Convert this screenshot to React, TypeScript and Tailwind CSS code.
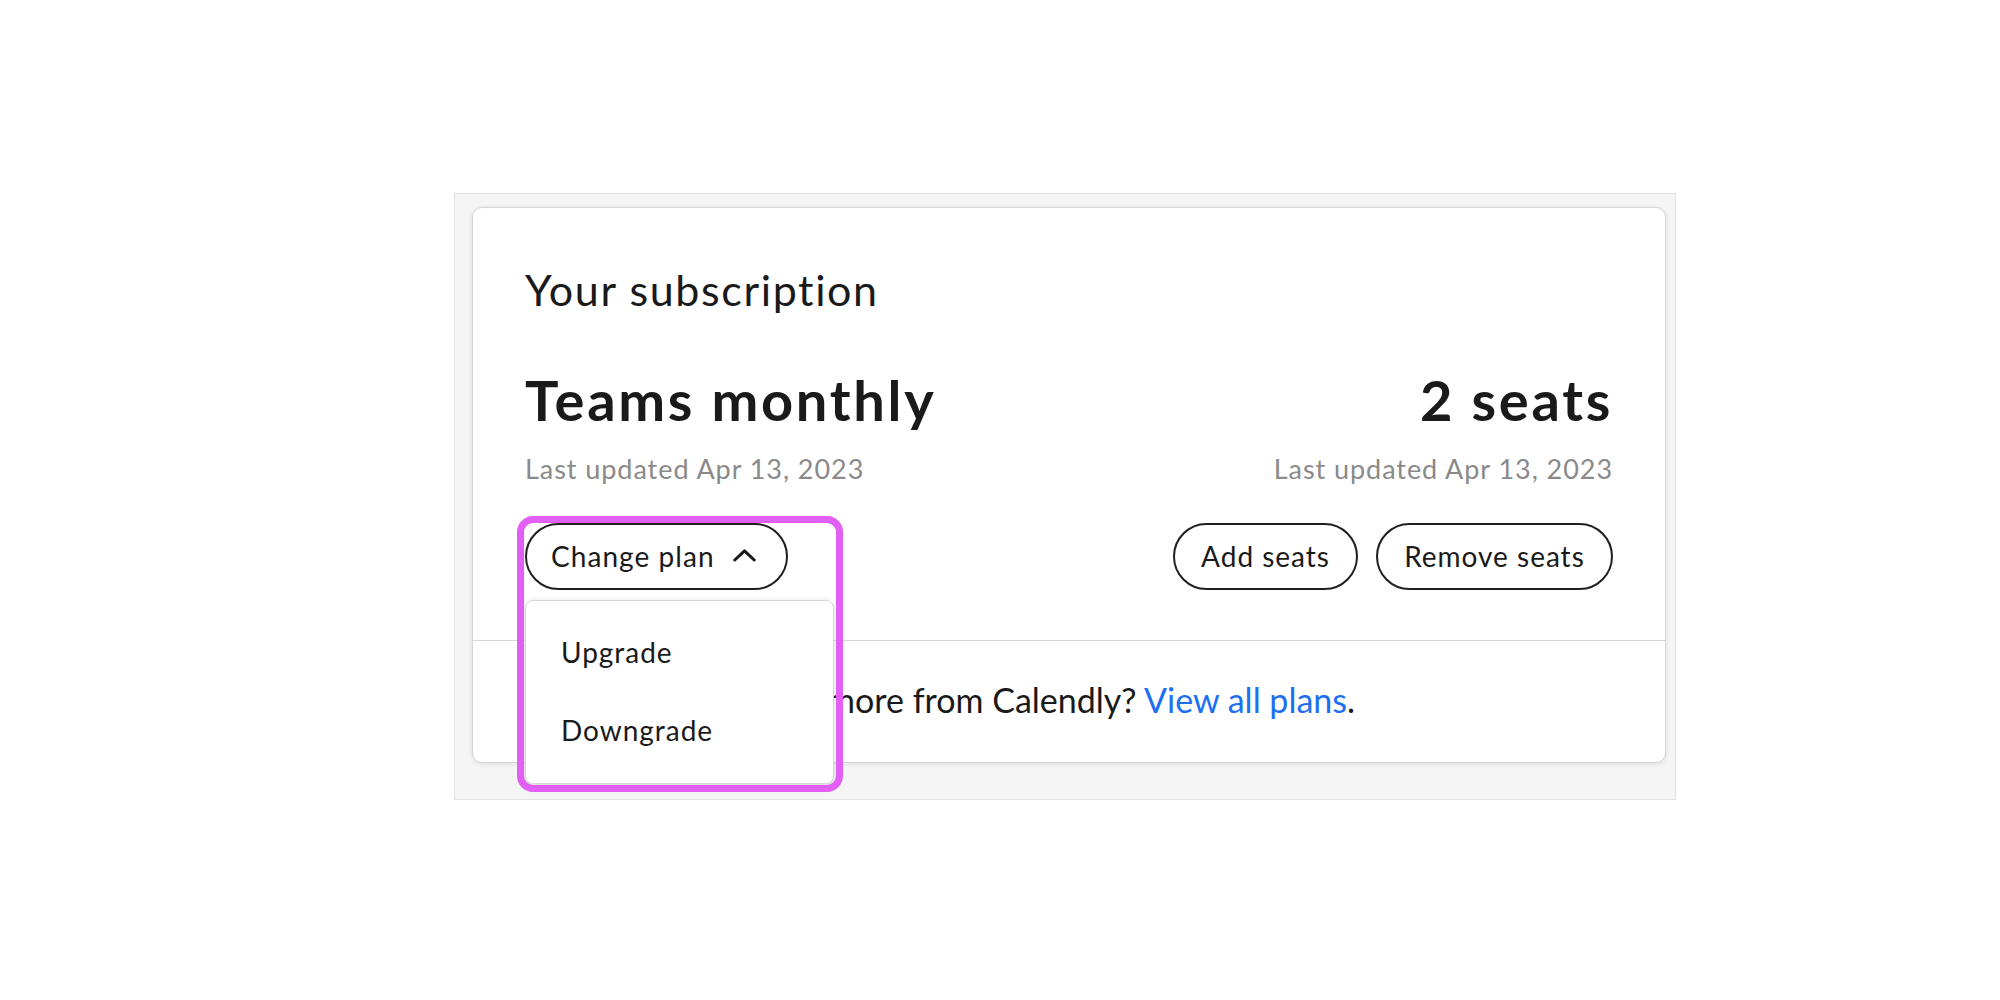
export default function App() {
  return (
    <div className="min-h-[1000px] w-[2000px] bg-white pl-[454px] pt-[193px] font-['Lato',sans-serif] text-[#1a1a1a]">
      <div className="w-[1222px] border border-[#e2e2e2] bg-[#f5f5f5] pb-[36px] pl-[17px] pr-[9px] pt-[13px]">
        <div className="rounded-[10px] border border-[#d6d6d6] bg-white shadow-[0_1px_5px_rgba(0,0,0,0.10)]">
          <div className="px-[52px] pb-[50px] pt-[60px]">
            <h2 className="text-[43px] font-normal leading-none tracking-[0.038em]">Your subscription</h2>
            <div className="mt-[61px] flex justify-between">
              <div>
                <div className="text-[56px] font-bold leading-none tracking-[0.048em]">Teams monthly</div>
                <div className="mt-[27px] text-[27px] leading-none tracking-[0.035em] text-[#8a8a8a]">Last updated Apr 13, 2023</div>
              </div>
              <div className="text-right">
                <div className="text-[56px] font-bold leading-none tracking-[0.048em]">2 seats</div>
                <div className="mt-[27px] text-[27px] leading-none tracking-[0.035em] text-[#8a8a8a]">Last updated Apr 13, 2023</div>
              </div>
            </div>
            <div className="mt-[41px] flex justify-between">
              <div className="relative">
                <button className="flex h-[67px] w-[263px] items-center gap-[18px] rounded-full border-2 border-[#1f1f1f] bg-white pb-[2px] pl-[24px] text-[28px] leading-none tracking-[0.038em] text-[#1a1a1a]">
                  <span>Change plan</span>
                  <svg width="23" height="13" viewBox="0 0 23 13" fill="none">
                    <polyline points="1.8,11 11.5,1.8 21.2,11" stroke="#1a1a1a" strokeWidth="3" strokeLinecap="round" strokeLinejoin="round" />
                  </svg>
                </button>
                <div className="absolute left-0 top-[77px] z-10 h-[184px] w-[309px] rounded-[8px] border border-[#d6d6d6] bg-white pl-[35px] pt-[37px] shadow-[0_2px_8px_rgba(0,0,0,0.12)]">
                  <div className="text-[28px] leading-none tracking-[0.035em] text-[#1a1a1a]">Upgrade</div>
                  <div className="mt-[50px] text-[28px] leading-none tracking-[0.035em] text-[#1a1a1a]">Downgrade</div>
                </div>
                <div className="pointer-events-none absolute left-[-8px] top-[-7px] z-20 h-[276px] w-[326px] rounded-[16px] border-[7px] border-[#e35ef5]" />
              </div>
              <div className="flex gap-[18px]">
                <button className="flex h-[67px] w-[185px] items-center justify-center rounded-full border-2 border-[#1f1f1f] bg-white pb-[2px] text-[28px] leading-none tracking-[0.035em] text-[#1a1a1a]">
                  Add seats
                </button>
                <button className="flex h-[67px] w-[237px] items-center justify-center rounded-full border-2 border-[#1f1f1f] bg-white pb-[2px] text-[28px] leading-none tracking-[0.035em] text-[#1a1a1a]">
                  Remove seats
                </button>
              </div>
            </div>
          </div>
          <div className="border-t border-[#d6d6d6] pb-[45px] pl-[52px] pt-[42px] text-[34px] leading-none text-[#1a1a1a]">
            Looking to get even more from Calendly? <span className="text-[#1d6ff2]">View all plans</span>.
          </div>
        </div>
      </div>
    </div>
  );
}
